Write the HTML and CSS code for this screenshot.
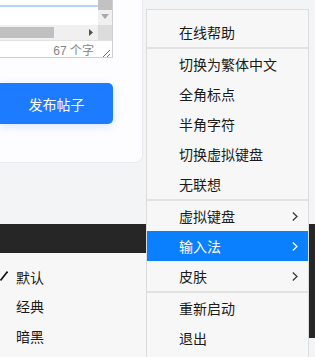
FILE: index.html
```html
<!DOCTYPE html>
<html lang="zh">
   <head>
      <meta charset="UTF-8" />
      <title>输入法菜单</title>
      <link rel="stylesheet" href="styles.css">
   </head>
   <body>
      <div class="stage">
         <div class="card">
            <div class="editor">
               <div class="editor-body">
                  <div class="text-area"><div class="sel-line"></div></div>
                  <div class="vscroll">
                     <div class="vthumb"></div>
                     <svg class="down-arrow" width="8" height="5" viewBox="0 0 8 5"><path d="M0 0 L8 0 L4 5 Z" fill="#a8a8a8"/></svg>
                  </div>
                  <div class="hscroll">
                     <div class="hthumb"></div>
                     <svg class="right-arrow" width="4" height="7" viewBox="0 0 4 7"><path d="M0 0 L4 3.5 L0 7 Z" fill="#505050"/></svg>
                  </div>
                  <div class="corner"></div>
               </div>
               <div class="editor-foot">
                  <span class="counter">67 个字</span>
                  <svg class="grip" width="8" height="8" viewBox="0 0 8 8"><path d="M1 8 L8 1 M5 8 L8 5" stroke="#707070" stroke-width="1"/></svg>
               </div>
            </div>
            <button class="publish-btn">发布帖子</button>
         </div>
         <div class="dark-band"></div>
         <div class="lower">
            <ul class="skin-list">
               <li><svg class="tick" width="8" height="10" viewBox="0 0 8 10"><path d="M0.5 9.5 L7.5 0.5" stroke="#111" stroke-width="1.6"/></svg>默认</li>
               <li>经典</li>
               <li>暗黑</li>
            </ul>
            <div class="right-strip"></div>
         </div>
      </div>

      <ul class="context-menu">
         <li>在线帮助</li>
         <li class="sep"></li>
         <li>切换为繁体中文</li>
         <li>全角标点</li>
         <li>半角字符</li>
         <li>切换虚拟键盘</li>
         <li>无联想</li>
         <li class="sep"></li>
         <li>虚拟键盘<svg class="chev" width="6" height="9" viewBox="0 0 6 9"><path d="M0.8 0.5 L5 4.5 L0.8 8.5" fill="none" stroke="currentColor" stroke-width="1.2"/></svg></li>
         <li class="active">输入法<svg class="chev" width="6" height="9" viewBox="0 0 6 9"><path d="M0.8 0.5 L5 4.5 L0.8 8.5" fill="none" stroke="currentColor" stroke-width="1.2"/></svg></li>
         <li>皮肤<svg class="chev" width="6" height="9" viewBox="0 0 6 9"><path d="M0.8 0.5 L5 4.5 L0.8 8.5" fill="none" stroke="currentColor" stroke-width="1.2"/></svg></li>
         <li class="sep"></li>
         <li>重新启动</li>
         <li>退出</li>
      </ul>
   </body>
</html>
```

FILE: styles.css
```css
body {
margin: 0;
width: 315px;
height: 357px;
overflow: hidden;
position: relative;
background: #f3f4f6;
font-family: 'Liberation Sans', 'Noto Sans CJK SC', sans-serif;
color: #1a1a1a;
}
.stage {
display: flex;
flex-direction: column;
}
.card {
width: 143px;
height: 163px;
box-sizing: border-box;
background: #fdfdff;
border-right: 1px solid #e8eaee;
border-bottom: 1px solid #e8eaee;
border-bottom-right-radius: 8px;
}
.editor {
width: 113px;
height: 58px;
box-sizing: border-box;
border-right: 1px solid #cfcfcf;
border-bottom: 1px solid #cfcfcf;
display: flex;
flex-direction: column;
background: #fff;
}
.editor-body {
display: grid;
grid-template-columns: 1fr 14px;
grid-template-rows: 25px 15px;
}
.text-area {
padding-top: 5px;
}
.sel-line {
height: 2px;
background: #b5d5fb;
}
.vscroll {
background: #f0f0f0;
display: flex;
flex-direction: column;
align-items: center;
}
.vthumb {
width: 14px;
height: 10px;
background: #c2c2c2;
}
.down-arrow {
margin-top: 4px;
}
.hscroll {
background: #f0f0f0;
display: flex;
align-items: center;
}
.hthumb {
width: 54px;
height: 11px;
background: #c0c0c0;
}
.right-arrow {
margin-left: auto;
margin-right: 5px;
}
.corner {
background: #dcdcdc;
}
.editor-foot {
flex: 1;
border-top: 1px solid #e2e2e2;
display: flex;
align-items: center;
justify-content: flex-end;
padding-right: 2px;
}
.counter {
font-size: 12px;
color: #858585;
margin-right: 8px;
}
.grip {
margin-top: 6px;
}
.publish-btn {
display: block;
margin-top: 25px;
width: 113px;
height: 41px;
border: none;
border-radius: 0 5px 5px 0;
background: #1c7bff;
color: #fff;
font-family: inherit;
font-size: 14px;
box-shadow: 0 2px 10px rgba(28, 123, 255, 0.18);
padding: 0;
}
.dark-band {
margin-top: 61px;
height: 29px;
background: #262626;
}
.lower {
display: flex;
}
.skin-list {
list-style: none;
margin: 0;
padding: 9px 0 0 0;
width: 146px;
height: 104px;
box-sizing: border-box;
background: #f7f7f7;
}
.skin-list li {
height: 29.5px;
display: flex;
align-items: center;
padding-left: 16px;
font-size: 14px;
position: relative;
}
.tick {
position: absolute;
left: 0;
top: 9px;
}
.right-strip {
margin-left: auto;
width: 6px;
height: 85px;
background: #262626;
}
.context-menu {
position: absolute;
left: 146px;
top: 9px;
width: 163px;
box-sizing: border-box;
margin: 0;
padding: 7px 0 0 0;
list-style: none;
background: #f7f7f7;
border: 1px solid #dcdcdc;
border-bottom: none;
height: 360px;
}
.context-menu li {
height: 30px;
display: flex;
align-items: center;
padding: 0 10px 0 32px;
font-size: 14px;
color: #1a1a1a;
}
.context-menu li.sep {
height: 2px;
padding: 0;
background: #e2e2e2;
}
.context-menu li.active {
background: #0a80ff;
color: #fff;
}
.chev {
margin-left: auto;
color: #333;
}
.context-menu li.active .chev {
color: #fff;
}
```
